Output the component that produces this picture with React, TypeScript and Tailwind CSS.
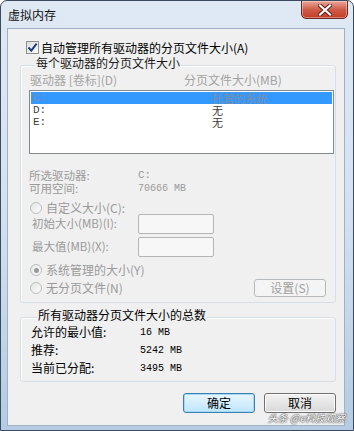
import React from "react";

const cjk = { fontFamily: '"Noto Sans CJK SC", "Liberation Sans", sans-serif' };
const mono = { fontFamily: '"Liberation Mono", "Noto Sans CJK SC", monospace' };

// Win7 风格的单选按钮（禁用态）
function Radio({ checked }: { checked?: boolean }) {
  return (
    <span className="w-[12px] h-[12px] rounded-full border border-[#bcbcbc] bg-gradient-to-br from-[#e6e6e6] to-[#fbfbfb] flex items-center justify-center shrink-0">
      {checked && <span className="w-[5px] h-[5px] rounded-full bg-[#9a9a9a]" />}
    </span>
  );
}

function Checkbox() {
  return (
    <span className="w-[13px] h-[13px] border border-[#8e8f8f] bg-gradient-to-br from-[#dcdcdc] to-[#ffffff] flex items-center justify-center shrink-0">
      <svg width="11" height="11" viewBox="0 0 11 11">
        <path d="M1.5 5.5 L4.3 8.6 L9.6 1.6" fill="none" stroke="#1d3f7e" strokeWidth="2" />
      </svg>
    </span>
  );
}

function GroupBox({
  label,
  dark,
  className,
  children,
}: {
  label: string;
  dark?: boolean;
  className?: string;
  children: React.ReactNode;
}) {
  return (
    <div className={`border border-[#d5dfe5] rounded-[3px] shadow-[inset_1px_1px_0_#ffffff] ${className ?? ""}`}>
      <div
        className={`-mt-[10px] ml-[6px] w-fit px-[1px] bg-[#f0f0f0] h-[14px] leading-[14px] text-[12px] ${
          dark ? "text-[#000]" : "text-[#1a1a1a]"
        }`}
      >
        {label}
      </div>
      {children}
    </div>
  );
}

export default function App() {
  const drives = [
    { d: "C:", size: "托管的系统", selected: true },
    { d: "D:", size: "无" },
    { d: "E:", size: "无" },
  ];

  return (
    <div
      className="relative w-[354px] h-[431px] flex flex-col border border-[#3b4a5c] rounded-t-[7px] bg-gradient-to-b from-[#dfe9f4] via-[#d3e1ef] to-[#b4cbe3] overflow-hidden"
      style={cjk}
    >
      {/* 标题栏 */}
      <div className="h-[27px] flex items-start justify-between pl-[7px] pr-[5px]">
        <span className="mt-[7px] text-[12px] leading-[14px] text-[#111]">虚拟内存</span>
        <div className="w-[47px] h-[19px] -mt-[1px] rounded-b-[5px] border border-[#6b2a22] bg-gradient-to-b from-[#e8a799] via-[#cf5b49] to-[#c43a24] flex items-center justify-center shadow-[inset_0_0_0_1px_rgba(255,255,255,0.35)]">
          <svg width="14" height="12" viewBox="0 0 14 12">
            <path d="M2 1.5 L12 10.5 M12 1.5 L2 10.5" stroke="#5a1d14" strokeWidth="4" strokeLinecap="square" />
            <path d="M2 1.5 L12 10.5 M12 1.5 L2 10.5" stroke="#ffffff" strokeWidth="2.2" strokeLinecap="square" />
          </svg>
        </div>
      </div>

      {/* 客户区 */}
      <div className="ml-[6px] mr-[8px] mb-[4px] flex-1 border border-[#9eb1c6] bg-[#f0f0f0] pl-[12px] pr-[8px] flex flex-col text-[12px]">
        <div className="mt-[12px] ml-[6px] h-[13px] flex items-center gap-[2px] text-[#000]">
          <Checkbox />
          <span className="leading-[13px]">自动管理所有驱动器的分页文件大小(A)</span>
        </div>

        <GroupBox label="每个驱动器的分页文件大小" className="mt-[11px] pl-[8px] pb-[5px]">
          <div className="mt-[3px] h-[14px] leading-[14px] flex text-[#a3a3a3]">
            <span className="ml-[1px] w-[154px]">驱动器 [卷标](D)</span>
            <span>分页文件大小(MB)</span>
          </div>
          <div className="mt-[3px] w-[305px] h-[64px] border border-[#828790] bg-white pt-[1px] px-[1px]">
            {drives.map((r) => (
              <div
                key={r.d}
                className={`h-[12px] leading-[12px] flex text-[11px] ${
                  r.selected ? "bg-[#3399ff] text-[#7b8ea5]" : "text-[#3c3c3c]"
                }`}
              >
                <span className="pl-[2px] w-[181px]" style={mono}>
                  {r.d}
                </span>
                <span className="text-[11px] leading-[12px]">{r.size}</span>
              </div>
            ))}
          </div>

          <div className="mt-[15px] h-[13px] leading-[13px] flex text-[#9a9a9a] text-[11.5px]">
            <span className="w-[109px]">所选驱动器:</span>
            <span className="text-[11px]" style={mono}>C:</span>
          </div>
          <div className="h-[13px] leading-[13px] flex text-[#9a9a9a] text-[11.5px]">
            <span className="w-[109px]">可用空间:</span>
            <span className="text-[10px]" style={mono}>70666 MB</span>
          </div>

          <div className="mt-[6px] h-[13px] flex items-center gap-[4px] text-[#9a9a9a]">
            <span className="ml-[1px]">
              <Radio />
            </span>
            <span className="leading-[13px]">自定义大小(C):</span>
          </div>
          <div className="h-[20px] flex items-center text-[#9a9a9a]">
            <span className="ml-[3px] w-[106px] text-[11.5px]">初始大小(MB)(I):</span>
            <span className="w-[76px] h-[20px] border border-[#b5b5b5] rounded-[2px] bg-[#f7f7f7]" />
          </div>
          <div className="mt-[3px] h-[20px] flex items-center text-[#9a9a9a]">
            <span className="ml-[3px] w-[106px] text-[11.5px]">最大值(MB)(X):</span>
            <span className="w-[76px] h-[20px] border border-[#b5b5b5] rounded-[2px] bg-[#f7f7f7]" />
          </div>

          <div className="mt-[6px] h-[14px] flex items-center gap-[4px] text-[#9a9a9a]">
            <span className="ml-[1px]">
              <Radio checked />
            </span>
            <span className="leading-[14px]">系统管理的大小(Y)</span>
          </div>
          <div className="mt-[2px] h-[18px] flex items-center text-[#9a9a9a]">
            <span className="ml-[1px]">
              <Radio />
            </span>
            <span className="ml-[4px] leading-[14px]">无分页文件(N)</span>
            <span className="ml-auto mr-[9px] w-[72px] h-[18px] border border-[#b7babc] rounded-[3px] bg-[#f4f4f4] flex items-center justify-center text-[#a0a0a0]">
              设置(S)
            </span>
          </div>
        </GroupBox>

        <GroupBox label="所有驱动器分页文件大小的总数" dark className="mt-[14px] pl-[10px] pb-[4px]">
          <div className="mt-[1px] text-[#000]">
            {[
              ["允许的最小值:", "16 MB"],
              ["推荐:", "5242 MB"],
              ["当前已分配:", "3495 MB"],
            ].map(([k, v]) => (
              <div key={k} className="h-[18px] flex items-center">
                <span className="w-[109px] leading-[14px]">{k}</span>
                <span className="text-[10px]" style={mono}>
                  {v}
                </span>
              </div>
            ))}
          </div>
        </GroupBox>

        <div className="mt-[11px] flex justify-end gap-[9px]">
          <button className="w-[72px] h-[20px] border border-[#3c7fb1] rounded-[3px] bg-gradient-to-b from-[#eaf6fd] to-[#bee6fd] shadow-[inset_0_0_0_1px_#a7d9f5] text-[12px] text-[#000] leading-none">
            确定
          </button>
          <button className="w-[72px] h-[20px] border border-[#707070] rounded-[3px] bg-gradient-to-b from-[#f2f2f2] to-[#d9d9d9] shadow-[inset_0_0_0_1px_#fcfcfc] text-[12px] text-[#000] leading-none">
            取消
          </button>
        </div>
      </div>

      {/* 水印 */}
      <span className="absolute right-[8px] bottom-[6px] text-[10px] leading-[12px] italic text-white [text-shadow:0_0_2px_#444,0_0_1px_#222]">
        头条 @e科技观察
      </span>
    </div>
  );
}
